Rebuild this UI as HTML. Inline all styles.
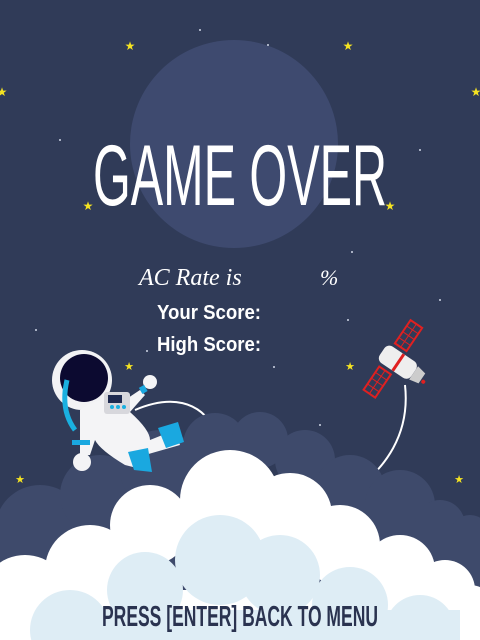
<!DOCTYPE html>
<html><head><meta charset="utf-8"><style>
html,body{margin:0;padding:0;width:480px;height:640px;overflow:hidden;background:#303b58}
svg{display:block;position:absolute;top:0;left:0}
</style></head><body>
<svg width="480" height="640" viewBox="0 0 480 640" xmlns="http://www.w3.org/2000/svg">
<rect width="480" height="640" fill="#303b58"/>
<circle cx="234" cy="144" r="104" fill="#3e4a6f"/>
<g fill="#f5e322">
<text x="130" y="50" font-size="12" text-anchor="middle">★</text>
<text x="348" y="50" font-size="12" text-anchor="middle">★</text>
<text x="2" y="96" font-size="12" text-anchor="middle">★</text>
<text x="476" y="96" font-size="12" text-anchor="middle">★</text>
<text x="88" y="210" font-size="12" text-anchor="middle">★</text>
<text x="390" y="210" font-size="12" text-anchor="middle">★</text>
<text x="129" y="370" font-size="11" text-anchor="middle">★</text>
<text x="350" y="370" font-size="11" text-anchor="middle">★</text>
<text x="20" y="483" font-size="11" text-anchor="middle">★</text>
<text x="459" y="483" font-size="11" text-anchor="middle">★</text>
</g>
<g fill="#cfd6e6">
<circle cx="352" cy="252" r="1"/><circle cx="348" cy="320" r="1"/><circle cx="274" cy="367" r="1"/><circle cx="147" cy="351" r="1"/><circle cx="36" cy="330" r="1"/><circle cx="268" cy="45" r="1"/><circle cx="200" cy="30" r="1"/><circle cx="60" cy="140" r="1"/><circle cx="420" cy="150" r="1"/><circle cx="320" cy="425" r="1"/><circle cx="440" cy="300" r="1"/>
</g>
<text x="240" y="205" fill="#fff" font-family="Liberation Sans, sans-serif" font-size="86" text-anchor="middle" textLength="294" lengthAdjust="spacingAndGlyphs">GAME OVER</text>
<text x="139" y="285" fill="#fff" font-family="Liberation Serif, serif" font-style="italic" font-size="24">AC Rate is</text>
<text x="320" y="285" fill="#fff" font-family="Liberation Serif, serif" font-style="italic" font-size="22">%</text>
<g font-family="Liberation Sans, sans-serif" font-weight="bold" font-size="20" fill="#fff">
<text x="157" y="319" textLength="104" lengthAdjust="spacingAndGlyphs">Your Score:</text>
<text x="157" y="351" textLength="104" lengthAdjust="spacingAndGlyphs">High Score:</text>
</g>
<path d="M135 410 C170 395 200 400 215 430 C225 450 230 450 240 452" stroke="#fff" stroke-width="2" fill="none"/>
<path d="M405 385 C410 430 390 470 340 500" stroke="#fff" stroke-width="2" fill="none"/>
<!-- dark clouds -->
<g fill="#3e4a6b">
<circle cx="40" cy="530" r="45"/><circle cx="100" cy="495" r="40"/><circle cx="160" cy="470" r="40"/><circle cx="215" cy="445" r="32"/><circle cx="260" cy="440" r="28"/><circle cx="305" cy="460" r="30"/><circle cx="350" cy="490" r="35"/><circle cx="400" cy="505" r="35"/><circle cx="440" cy="525" r="25"/><circle cx="470" cy="535" r="20"/>
<rect x="0" y="530" width="480" height="110"/>
</g>
<!-- white clouds -->
<g fill="#fff">
<circle cx="230" cy="500" r="50"/><circle cx="290" cy="515" r="42"/><circle cx="150" cy="525" r="40"/><circle cx="340" cy="545" r="40"/><circle cx="400" cy="570" r="35"/><circle cx="90" cy="570" r="45"/><circle cx="445" cy="590" r="30"/><circle cx="25" cy="600" r="45"/><circle cx="470" cy="610" r="25"/>
<rect x="0" y="590" width="480" height="50"/>
</g>
<!-- light clouds -->
<g fill="#deedf5">
<circle cx="220" cy="560" r="45"/><circle cx="280" cy="575" r="40"/><circle cx="145" cy="590" r="38"/><circle cx="350" cy="605" r="38"/><circle cx="70" cy="630" r="40"/><circle cx="420" cy="630" r="35"/>
<rect x="40" y="610" width="420" height="30"/>
</g>
<text x="240" y="626" fill="#2a3350" font-family="Liberation Sans, sans-serif" font-weight="bold" font-size="29" text-anchor="middle" textLength="276" lengthAdjust="spacingAndGlyphs">PRESS [ENTER] BACK TO MENU</text>
<!-- satellite -->
<g transform="translate(402 365) rotate(34)">
<g fill="none" stroke="#e02020">
<rect x="-18" y="-42" width="14" height="28" stroke-width="2"/>
<path d="M-18 -35h14M-18 -28h14M-18 -21h14M-11 -42v28" stroke-width="1"/>
<rect x="-18" y="14" width="14" height="28" stroke-width="2"/>
<path d="M-18 21h14M-18 28h14M-18 35h14M-11 14v28" stroke-width="1"/>
</g>
<rect x="-24" y="-10" width="38" height="20" rx="6" fill="#eee"/>
<rect x="-6" y="-10" width="3" height="20" fill="#e02020"/>
<path d="M14 -8 L24 -6 L24 6 L14 8Z" fill="#ccc"/>
<circle cx="27" cy="2" r="2" fill="#e02020"/>
</g>
<!-- astronaut -->
<g>
<circle cx="82" cy="380" r="30" fill="#f2f2f4"/>
<circle cx="84" cy="378" r="24" fill="#0c0a30"/>
<path d="M67 380 Q60 410 75 430" stroke="#1ab0e0" stroke-width="5" fill="none"/>
<path d="M80 410 Q100 395 125 400 L140 390 L145 395 L130 412 Q150 430 150 440 L175 430 L180 445 L145 455 Q130 455 120 445 L140 455 L145 470 L125 465 Q100 450 95 440 L90 455 L80 455 Z" fill="#f4f4f6"/>
<rect x="104" y="392" width="26" height="22" rx="3" fill="#d7d7dc"/>
<rect x="108" y="395" width="14" height="8" fill="#1e2a50"/>
<circle cx="112" cy="407" r="2" fill="#1ab0e0"/><circle cx="118" cy="407" r="2" fill="#1ab0e0"/><circle cx="124" cy="407" r="2" fill="#1ab0e0"/>
<path d="M158 428 L178 422 L184 442 L166 448Z" fill="#1aa8e0"/>
<path d="M128 452 L148 448 L152 472 L134 470Z" fill="#1aa8e0"/>
<circle cx="150" cy="382" r="7" fill="#f4f4f6"/>
<rect x="140" y="386" width="6" height="7" fill="#1aa8e0" transform="rotate(-30 143 389)"/>
<rect x="72" y="440" width="18" height="5" fill="#1aa8e0"/>
<circle cx="82" cy="462" r="9" fill="#f4f4f6"/>
</g>
</svg>
</body></html>
